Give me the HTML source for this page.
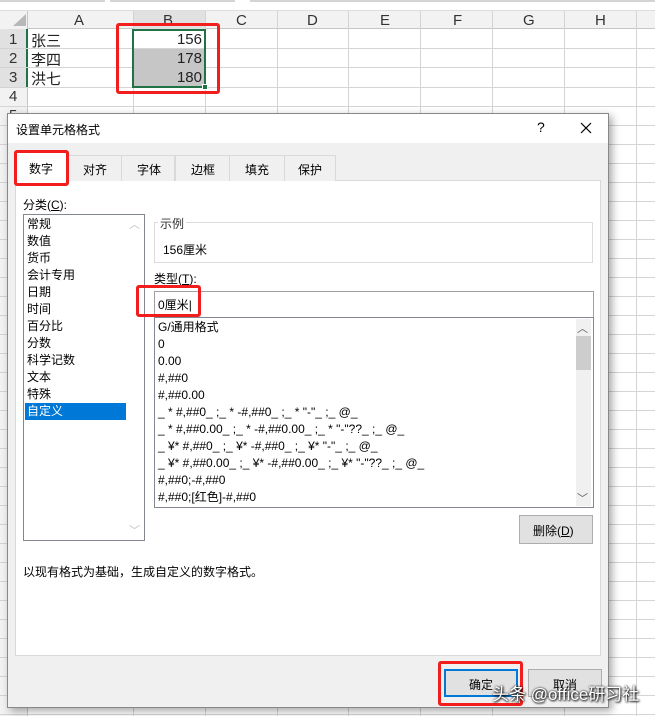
<!DOCTYPE html>
<html><head><meta charset="utf-8">
<style>
*{margin:0;padding:0;box-sizing:border-box}
body{width:655px;height:716px;overflow:hidden;background:#fff;position:relative;font-family:"Liberation Sans","Noto Sans CJK SC",sans-serif;font-size:12px;color:#000}
.a{position:absolute}
.t{position:absolute;white-space:nowrap}
</style></head><body>
<div class="a" style="left:0;top:0;width:655px;height:11px;background:#fff;border-bottom:1px solid #ddd"></div>
<div class="a" style="left:0;top:0;width:105px;height:2px;background:#d4d4d4"></div>
<div class="a" style="left:110px;top:0;width:125px;height:2px;background:#d4d4d4"></div>
<div class="a" style="left:250px;top:0;width:405px;height:2px;background:#d4d4d4"></div>
<div class="a" style="left:0;top:11px;width:655px;height:18px;background:#f2f2f2;border-bottom:1px solid #c6c6c6"></div>
<div class="a" style="left:0;top:11px;width:28px;height:705px;background:#f2f2f2;border-right:1px solid #c6c6c6"></div>
<div class="a" style="left:133px;top:11px;width:72px;height:18px;background:#e1e1e1"></div>
<div class="a" style="left:0;top:29px;width:28px;height:58px;background:#e1e1e1;border-right:2px solid #217346"></div>
<svg class="a" style="left:0;top:0" width="655" height="716">
<polygon points="13,26 26,26 26,14" fill="#b8b8b8"/>
<g stroke="#d4d4d4" stroke-width="1">
<line x1="133.5" y1="11" x2="133.5" y2="716"/><line x1="205.5" y1="11" x2="205.5" y2="716"/>
<line x1="277.5" y1="11" x2="277.5" y2="716"/><line x1="348.5" y1="11" x2="348.5" y2="716"/>
<line x1="420.5" y1="11" x2="420.5" y2="716"/><line x1="492.5" y1="11" x2="492.5" y2="716"/>
<line x1="564.5" y1="11" x2="564.5" y2="716"/><line x1="636.5" y1="11" x2="636.5" y2="716"/>
<line x1="0" y1="48.5" x2="655" y2="48.5"/><line x1="0" y1="67.5" x2="655" y2="67.5"/>
<line x1="0" y1="87.5" x2="655" y2="87.5"/><line x1="0" y1="106.5" x2="655" y2="106.5"/>
<line x1="0" y1="125.5" x2="655" y2="125.5"/><line x1="0" y1="144.5" x2="655" y2="144.5"/>
<line x1="0" y1="163.5" x2="655" y2="163.5"/><line x1="0" y1="182.5" x2="655" y2="182.5"/>
<line x1="0" y1="201.5" x2="655" y2="201.5"/><line x1="0" y1="220.5" x2="655" y2="220.5"/>
<line x1="0" y1="239.5" x2="655" y2="239.5"/><line x1="0" y1="258.5" x2="655" y2="258.5"/>
<line x1="0" y1="277.5" x2="655" y2="277.5"/><line x1="0" y1="296.5" x2="655" y2="296.5"/>
<line x1="0" y1="315.5" x2="655" y2="315.5"/><line x1="0" y1="334.5" x2="655" y2="334.5"/>
<line x1="0" y1="353.5" x2="655" y2="353.5"/><line x1="0" y1="372.5" x2="655" y2="372.5"/>
<line x1="0" y1="391.5" x2="655" y2="391.5"/><line x1="0" y1="410.5" x2="655" y2="410.5"/>
<line x1="0" y1="429.5" x2="655" y2="429.5"/><line x1="0" y1="448.5" x2="655" y2="448.5"/>
<line x1="0" y1="467.5" x2="655" y2="467.5"/><line x1="0" y1="486.5" x2="655" y2="486.5"/>
<line x1="0" y1="505.5" x2="655" y2="505.5"/><line x1="0" y1="524.5" x2="655" y2="524.5"/>
<line x1="0" y1="543.5" x2="655" y2="543.5"/><line x1="0" y1="562.5" x2="655" y2="562.5"/>
<line x1="0" y1="581.5" x2="655" y2="581.5"/><line x1="0" y1="600.5" x2="655" y2="600.5"/>
<line x1="0" y1="619.5" x2="655" y2="619.5"/><line x1="0" y1="638.5" x2="655" y2="638.5"/>
<line x1="0" y1="657.5" x2="655" y2="657.5"/><line x1="0" y1="676.5" x2="655" y2="676.5"/>
<line x1="0" y1="695.5" x2="655" y2="695.5"/><line x1="0" y1="714.5" x2="655" y2="714.5"/>
</g>
</svg>
<div class="t" style="left:74px;top:12px;font-size:15px;color:#333">A</div>
<div class="t" style="left:163px;top:12px;font-size:15px;color:#333">B</div>
<div class="t" style="left:236px;top:12px;font-size:15px;color:#333">C</div>
<div class="t" style="left:307px;top:12px;font-size:15px;color:#333">D</div>
<div class="t" style="left:380px;top:12px;font-size:15px;color:#333">E</div>
<div class="t" style="left:453px;top:12px;font-size:15px;color:#333">F</div>
<div class="t" style="left:523px;top:12px;font-size:15px;color:#333">G</div>
<div class="t" style="left:595px;top:12px;font-size:15px;color:#333">H</div>
<div class="t" style="left:9px;top:31px;font-size:15px;color:#333">1</div>
<div class="t" style="left:9px;top:50px;font-size:15px;color:#333">2</div>
<div class="t" style="left:9px;top:69px;font-size:15px;color:#333">3</div>
<div class="t" style="left:9px;top:88px;font-size:15px;color:#333">4</div>
<div class="t" style="left:9px;top:107px;font-size:15px;color:#333">5</div>
<div class="t" style="left:31px;top:30px;font-size:15px;color:#222">张三</div>
<div class="t" style="left:31px;top:49px;font-size:15px;color:#222">李四</div>
<div class="t" style="left:31px;top:68px;font-size:15px;color:#222">洪七</div>
<div class="a" style="left:134px;top:49px;width:70px;height:38px;background:#c6c6c6"></div>
<div class="a" style="left:132px;top:29px;width:74px;height:59px;border:2px solid #217346"></div>
<div class="a" style="left:202px;top:84px;width:6px;height:6px;background:#217346;border:1px solid #fff"></div>
<div class="t" style="left:160px;top:31px;width:42px;text-align:right;font-size:15px;color:#222">156</div>
<div class="t" style="left:160px;top:50px;width:42px;text-align:right;font-size:15px;color:#222">178</div>
<div class="t" style="left:160px;top:69px;width:42px;text-align:right;font-size:15px;color:#222">180</div>
<div class="a" style="left:116px;top:23px;width:104px;height:71px;border:3px solid #f21e1e;border-radius:3px"></div>

<div class="a" style="left:7px;top:113px;width:602px;height:595px;background:#f0f0f0;border:1px solid #888;box-shadow:3px 3px 8px rgba(0,0,0,.35)"></div>
<div class="a" style="left:8px;top:114px;width:600px;height:29px;background:#fff"></div>
<div class="t" style="left:16px;top:121px;font-size:12px">设置单元格格式</div>
<div class="t" style="left:537px;top:119px;font-size:14px">?</div>
<svg class="a" style="left:580px;top:122px" width="12" height="12"><path d="M1 1L11 11M11 1L1 11" stroke="#000" stroke-width="1.2"/></svg>
<div class="a" style="left:15px;top:180px;width:586px;height:476px;background:#fff;border:1px solid #d9d9d9"></div>
<div class="a" style="left:68px;top:155px;width:54px;height:26px;background:#f0f0f0;border:1px solid #d9d9d9;border-bottom:none"></div>
<div class="a" style="left:121px;top:155px;width:54px;height:26px;background:#f0f0f0;border:1px solid #d9d9d9;border-bottom:none"></div>
<div class="a" style="left:175px;top:155px;width:55px;height:26px;background:#f0f0f0;border:1px solid #d9d9d9;border-bottom:none"></div>
<div class="a" style="left:229px;top:155px;width:56px;height:26px;background:#f0f0f0;border:1px solid #d9d9d9;border-bottom:none"></div>
<div class="a" style="left:284px;top:155px;width:52px;height:26px;background:#f0f0f0;border:1px solid #d9d9d9;border-bottom:none"></div>
<div class="a" style="left:15px;top:152px;width:53px;height:30px;background:#fff;border:1px solid #d9d9d9;border-bottom:none"></div>
<div class="t" style="left:29px;top:160px">数字</div>
<div class="t" style="left:83px;top:161px">对齐</div>
<div class="t" style="left:137px;top:161px">字体</div>
<div class="t" style="left:191px;top:161px">边框</div>
<div class="t" style="left:245px;top:161px">填充</div>
<div class="t" style="left:298px;top:161px">保护</div>
<div class="a" style="left:14px;top:150px;width:55px;height:36px;border:3px solid #f21e1e;border-radius:3px"></div>
<div class="t" style="left:23px;top:196px">分类(<u>C</u>):</div>
<div class="a" style="left:23px;top:214px;width:122px;height:327px;background:#fff;border:1px solid #828790"></div>
<div class="t" style="left:129px;top:216px;color:#c0c0c0;font-size:11px">︿</div>
<div class="t" style="left:129px;top:522px;color:#c0c0c0;font-size:11px">﹀</div>
<div class="a" style="left:25px;top:403px;width:101px;height:17px;background:#0078d7"></div>
<div class="t" style="left:27px;top:216px;line-height:17px">常规<br>数值<br>货币<br>会计专用<br>日期<br>时间<br>百分比<br>分数<br>科学记数<br>文本<br>特殊<br><span style="color:#fff">自定义</span></div>
<div class="a" style="left:154px;top:222px;width:439px;height:41px;border:1px solid #dcdcdc"></div>
<div class="t" style="left:158px;top:215px;background:#fff;padding:0 2px;color:#333">示例</div>
<div class="t" style="left:163px;top:241px">156厘米</div>
<div class="t" style="left:154px;top:270px">类型(<u>T</u>):</div>
<div class="a" style="left:154px;top:291px;width:440px;height:27px;background:#fff;border:1px solid #a0a0a0"></div>
<div class="t" style="left:158px;top:296px">0厘米<span style="font-weight:100">|</span></div>
<div class="a" style="left:136px;top:285px;width:65px;height:32px;border:3px solid #f21e1e;border-radius:3px"></div>
<div class="a" style="left:154px;top:317px;width:440px;height:191px;background:#fff;border:1px solid #828790"></div>
<div class="a" style="left:576px;top:319px;width:15px;height:187px;background:#f0f0f0"></div>
<div class="a" style="left:576px;top:336px;width:15px;height:34px;background:#cdcdcd"></div>
<div class="t" style="left:577px;top:320px;color:#606060;font-size:11px">︿</div>
<div class="t" style="left:577px;top:490px;color:#606060;font-size:11px">﹀</div>
<div class="t" style="left:158px;top:319px;line-height:17px">G/通用格式<br>0<br>0.00<br>#,##0<br>#,##0.00<br>_ * #,##0_ ;_ * -#,##0_ ;_ * "-"_ ;_ @_<br>_ * #,##0.00_ ;_ * -#,##0.00_ ;_ * "-"??_ ;_ @_<br>_ ¥* #,##0_ ;_ ¥* -#,##0_ ;_ ¥* "-"_ ;_ @_<br>_ ¥* #,##0.00_ ;_ ¥* -#,##0.00_ ;_ ¥* "-"??_ ;_ @_<br>#,##0;-#,##0<br>#,##0;[红色]-#,##0</div>
<div class="a" style="left:519px;top:515px;width:74px;height:29px;background:#e1e1e1;border:1px solid #adadad"></div>
<div class="t" style="left:533px;top:522px">删除(<u>D</u>)</div>
<div class="t" style="left:23px;top:563px">以现有格式为基础，生成自定义的数字格式。</div>
<div class="a" style="left:444px;top:669px;width:74px;height:28px;background:#e1e1e1;border:2px solid #0078d7"></div>
<div class="t" style="left:469px;top:676px">确定</div>
<div class="a" style="left:528px;top:669px;width:74px;height:28px;background:#e1e1e1;border:1px solid #adadad"></div>
<div class="t" style="left:553px;top:676px">取消</div>
<div class="a" style="left:438px;top:661px;width:85px;height:45px;border:3px solid #f21e1e;border-radius:3px"></div>
<div class="t" style="left:492px;top:680px;font-size:17px;color:#fff;text-shadow:0 0 2px #000,1px 1px 2px #000">头条 @office研习社</div>
</body></html>
